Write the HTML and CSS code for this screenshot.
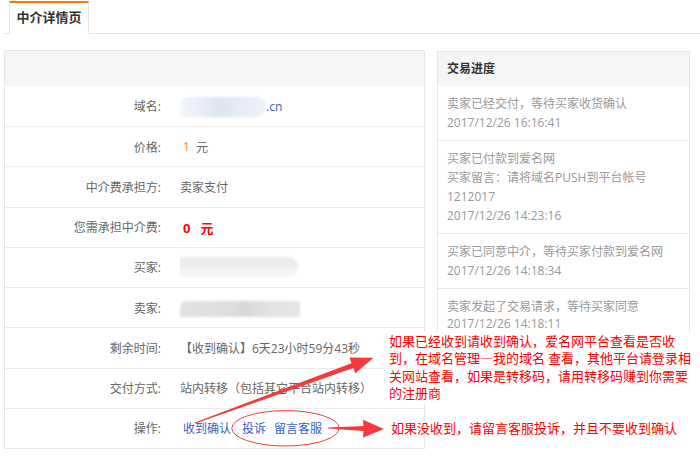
FILE: index.html
```html
<!DOCTYPE html>
<html lang="zh-CN">
<head>
<meta charset="utf-8">
<title>中介详情页</title>
<link rel="stylesheet" href="styles.css">
</head>
<body>
<div class="page">
  <div class="tabs">
    <div class="tab">中介详情页</div>
  </div>
  <div class="main">
    <div class="detail">
      <div class="detail-head"></div>
      <div class="row"><div class="label">域名:</div><div class="value"><span class="blur blur-domain"></span><span class="link">.cn</span></div></div>
      <div class="row"><div class="label">价格:</div><div class="value val-indent"><span class="orange">1</span>&nbsp;&nbsp;元</div></div>
      <div class="row"><div class="label">中介费承担方:</div><div class="value">卖家支付</div></div>
      <div class="row"><div class="label">您需承担中介费:</div><div class="value val-indent red-bold">0&nbsp;&nbsp;&nbsp;元</div></div>
      <div class="row"><div class="label">买家:</div><div class="value"><span class="blur blur-buyer"></span></div></div>
      <div class="row"><div class="label">卖家:</div><div class="value"><span class="blur blur-seller"></span></div></div>
      <div class="row"><div class="label">剩余时间:</div><div class="value">【收到确认】6天23小时59分43秒</div></div>
      <div class="row"><div class="label">交付方式:</div><div class="value">站内转移（包括其它平台站内转移）</div></div>
      <div class="row"><div class="label">操作:</div><div class="value val-indent"><span class="link link-a">收到确认</span><span class="link link-b">投诉</span><span class="link">留言客服</span></div></div>
    </div>
    <div class="progress">
      <div class="progress-head">交易进度</div>
      <div class="item">卖家已经交付，等待买家收货确认<br>2017/12/26 16:16:41</div>
      <div class="item">买家已付款到爱名网<br>买家留言：请将域名PUSH到平台帐号<br>1212017<br>2017/12/26 14:23:16</div>
      <div class="item">买家已同意中介，等待买家付款到爱名网<br>2017/12/26 14:18:34</div>
      <div class="item item-last">卖家发起了交易请求，等待买家同意<span class="date-line">2017/12/26 14:18:11</span></div>
    </div>
  </div>
  <div class="note note-1">如果已经收到请收到确认，爱名网平台查看是否收<br>到，在域名管理—我的域名 查看，其他平台请登录相<br>关网站查看，如果是转移码，请用转移码赚到你需要<br>的注册商</div>
  <svg class="marks" width="700" height="456" viewBox="0 0 700 456">
    <ellipse cx="285.5" cy="428.3" rx="53.7" ry="17.7" fill="none" stroke="#f23c3c" stroke-width="1"/>
    <polygon fill="#f43a3a" points="194.8,422.5 351.4,363.2 349.6,357.6 373.5,357.8 355.3,373.2 353.2,367.9 195.3,423.6"/>
    <polygon fill="#f43a3a" points="328,427.6 363.5,426 363,419.8 384,429 363,437.6 363.5,431 328,428.6"/>
  </svg>
  <div class="note note-2">如果没收到，请留言客服投诉，并且不要收到确认</div>
</div>
</body>
</html>
```
FILE: styles.css
```css
* { box-sizing: border-box; }
html, body { margin: 0; padding: 0; background: #fff; }
body {
  font-family: "Open Sans", "Noto Sans CJK SC", sans-serif;
  font-size: 12px;
  color: #666;
}
.page {
  position: relative;
  width: 700px;
  height: 456px;
  overflow: hidden;
}
.tabs {
  margin-left: 4px;
  padding-top: 1px;
  padding-left: 5px;
  height: 34px;
  border-bottom: 1px solid #e4e4e4;
  display: flex;
}
.tab {
  width: 80px;
  height: 33px;
  margin-bottom: -1px;
  border: 1px solid #e4e4e4;
  border-top: 2px solid #ff7a00;
  border-bottom: none;
  background: #fff;
  font-size: 13px;
  font-weight: bold;
  color: #333;
  line-height: 29px;
  text-align: center;
}
.main {
  display: flex;
  align-items: flex-start;
  padding-left: 4px;
  margin-top: 16px;
}
.detail {
  width: 421px;
  border: 1px solid #e6e6e6;
}
.detail-head {
  height: 35px;
  background: #f5f5f5;
}
.row {
  display: flex;
  align-items: center;
  height: 40.25px;
  border-top: 1px solid #ececec;
}
.row:nth-child(2) { height: 40px; border-top: none; }
.label {
  width: 156px;
  text-align: right;
  color: #666;
}
.value {
  padding-left: 19px;
  display: flex;
  align-items: center;
  color: #666;
}
.val-indent { padding-left: 22px; }
.orange { color: #ff8a2a; }
.red-bold { color: #f00; font-weight: bold; font-size: 13px; }
.link { color: #3461c8; }
.link-a { margin-right: 11px; }
.link-b { margin-right: 8px; }
.blur {
  display: inline-block;
  filter: blur(1.2px);
}
.blur-domain {
  width: 86px;
  height: 20px;
  border-radius: 8px 10px 12px 6px;
  background: linear-gradient(90deg, #f3f5fb 0%, #e9edf8 25%, #dde4f3 45%, #e6ebf7 70%, #eef1f9 100%);
  margin-top: 1px;
}
.blur-buyer {
  width: 118px;
  height: 20px;
  border-radius: 3px 10px 10px 3px;
  background: linear-gradient(180deg, #ebebeb 0%, #ebebeb 50%, #f3f3f3 50%, #f4f4f4 100%);
}
.blur-seller {
  width: 120px;
  height: 16px;
  margin-top: 2px;
  border-radius: 7px 2px 0 0;
  background: linear-gradient(90deg, #e2e2e2 0%, #dedede 40%, #d8d8d8 55%, #e3e3e3 75%, #e6e6e6 100%);
}
.progress {
  width: 253px;
  margin-left: 12px;
  margin-top: 1px;
  border: 1px solid #e6e6e6;
  color: #999;
}
.progress-head {
  height: 34px;
  line-height: 34px;
  padding-left: 9px;
  background: #f5f5f5;
  font-weight: bold;
  color: #333;
}
.item {
  padding: 8px 9px;
  line-height: 19px;
  border-top: 1px solid #e6e6e6;
  white-space: nowrap;
}
.item:nth-child(2) { border-top: none; }
.item-last { padding-bottom: 11px; }
.date-line {
  display: block;
  line-height: 16px;
}
.note {
  position: absolute;
  font-family: "Noto Sans CJK SC", sans-serif;
  font-size: 13px;
  line-height: 17.3px;
  color: #f00;
  white-space: nowrap;
}
.note-1 {
  left: 386px;
  top: 332px;
  padding: 0 3px 2px 3px;
  background: #fff;
}
.note-2 {
  left: 391px;
  top: 418.6px;
}
.marks {
  position: absolute;
  left: 0;
  top: 0;
  pointer-events: none;
}
```
